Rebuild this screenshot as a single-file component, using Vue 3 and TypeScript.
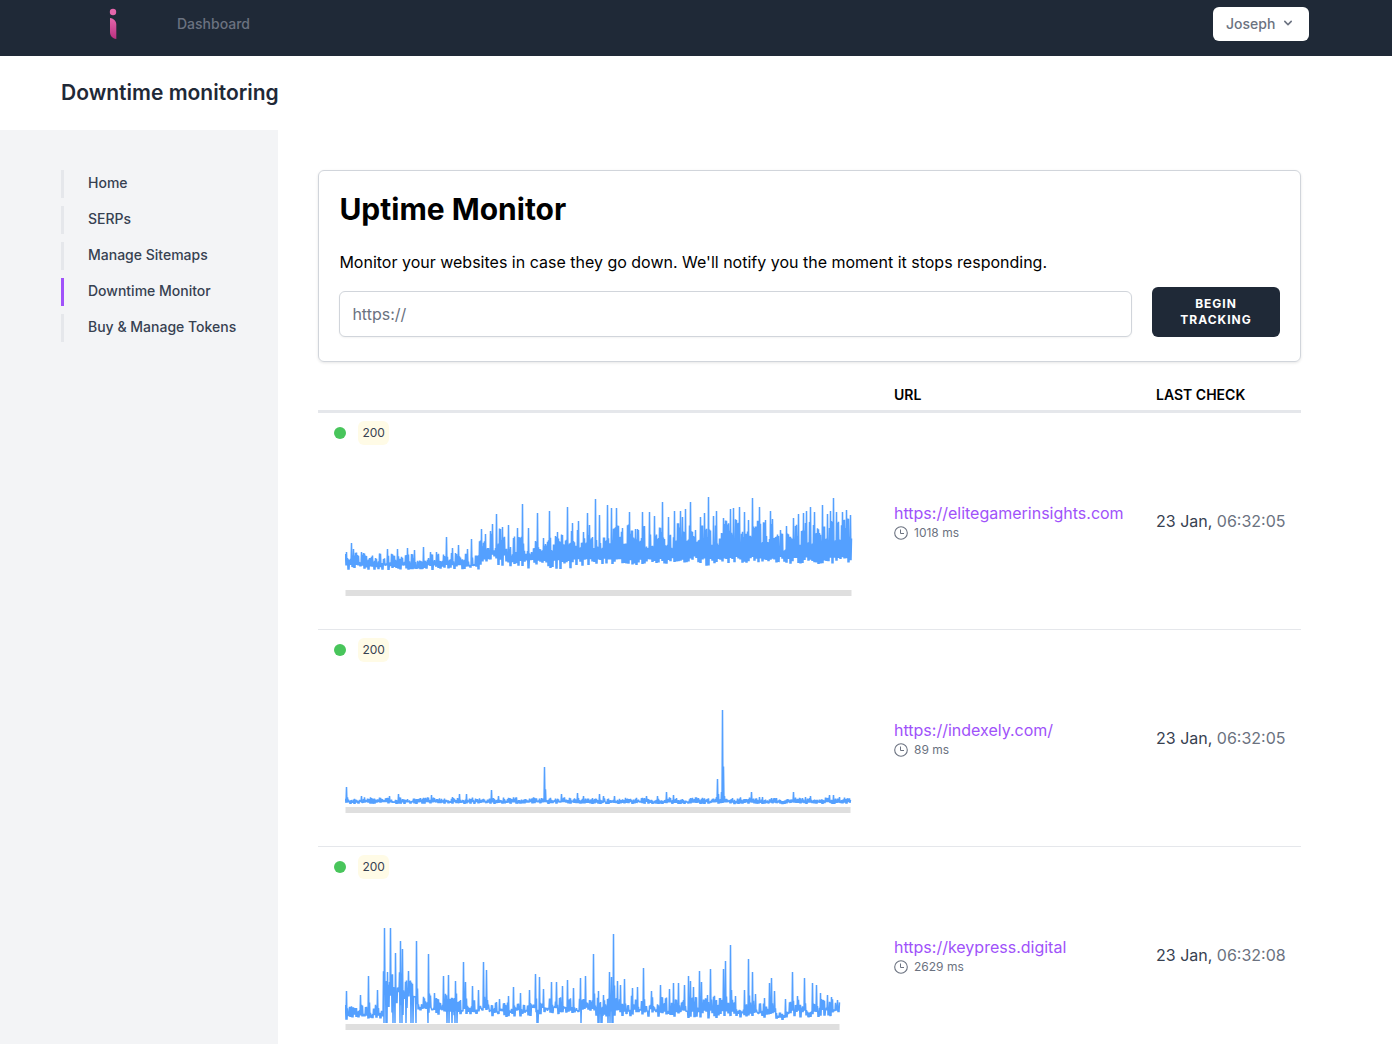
<script setup lang="ts">
import { ref } from 'vue'

type Point = [number, number]
/** Stretch of background noise: start x, highest line, lowest line, variation at the top, variation at the bottom */
type Band = [number, number, number, number, number]

interface Monitor {
  status: number
  url: string
  responseMs: number
  date: string
  time: string
  width: number
  trace: string
}

function buildTrace(width: number, seed: number, bands: Band[], spikes: Point[], drops: number[] = []): string {
  let state = seed
  const random = () => {
    state = (state * 16807) % 2147483647
    return state / 2147483647
  }
  const samples: number[] = []
  let peak = 0
  let dip = 0
  for (let i = 0; i <= width * 2; i++) {
    const x = i / 2
    const band = bands.filter((b) => b[0] <= x).pop() ?? bands[0]
    const [, top, bottom, topVar, bottomVar] = band
    if (i % 4 === 0) {
      peak = top + random() * topVar
      dip = bottom - random() * bottomVar
    }
    samples.push(i % 2 === 0 ? peak + random() * 2 : dip)
  }
  for (const x of drops) samples[x * 2 + 1] = 97
  for (const [x, y] of spikes) {
    const i = Math.min(x * 2, samples.length - 1)
    samples[i] = y
    if (i + 2 < samples.length) samples[i + 2] = Math.min(samples[i + 2], y + (bands[0][2] - y) * 0.6)
  }
  return samples.map((y, i) => `${i / 2},${y.toFixed(1)}`).join(' ')
}

const eliteTrace = buildTrace(
  506,
  4211,
  [
    [0, 60, 78, 12, 5], [93, 66, 77, 7, 3], [98, 60, 78, 12, 5], [133, 42, 76, 18, 10],
    [145, 36, 74, 22, 12], [160, 42, 77, 20, 9], [225, 37, 74, 20, 9], [260, 32, 73, 22, 6],
    [300, 30, 72, 26, 6], [345, 27, 74, 26, 10], [370, 26, 71, 27, 6], [430, 36, 72, 22, 8],
    [450, 28, 72, 24, 8], [490, 26, 71, 24, 6],
  ],
  [
    [1, 60], [6, 51], [8, 57], [16, 60], [42, 57], [52, 57], [62, 56], [69, 58], [78, 55], [85, 60], [91, 60],
    [101, 45], [107, 56], [113, 53], [122, 57], [126, 47], [136, 37], [140, 42], [145, 39], [147, 32], [151, 22],
    [157, 35], [163, 33], [172, 36], [177, 12], [183, 36], [192, 21], [198, 46], [204, 19], [212, 40], [217, 43],
    [222, 15], [227, 31], [233, 29], [238, 40], [242, 21], [244, 33], [250, 7], [254, 23], [262, 13], [266, 16],
    [271, 16], [277, 36], [284, 20], [290, 37], [297, 20], [304, 20], [309, 24], [317, 10], [323, 25], [329, 19],
    [335, 19], [337, 25], [340, 17], [345, 10], [350, 38], [355, 25], [359, 21], [363, 5], [368, 24], [371, 19],
    [378, 26], [385, 17], [388, 16], [394, 15], [399, 20], [403, 28], [407, 6], [414, 15], [420, 28], [425, 19],
    [427, 27], [435, 38], [441, 34], [448, 26], [453, 22], [458, 21], [461, 19], [465, 15], [469, 20], [477, 13],
    [482, 22], [485, 19], [488, 6], [491, 20], [497, 20], [501, 18], [505, 23],
  ],
)

const indexelyTrace = buildTrace(
  505,
  917,
  [[0, 88, 95, 3, 2]],
  [
    [1, 78], [16, 87], [44, 87], [53, 85], [86, 86], [107, 88], [114, 85], [121, 85], [146, 81], [153, 87],
    [199, 58], [216, 85], [232, 84], [238, 87], [254, 85], [258, 87], [269, 87], [301, 87], [312, 87], [321, 83],
    [328, 86], [345, 89], [372, 70], [376, 83], [377, 1], [379, 87], [406, 83], [414, 88], [417, 88], [426, 89],
    [448, 83], [460, 88], [465, 87], [484, 86], [488, 86], [494, 88],
  ],
)

const keypressTrace = buildTrace(
  494,
  6607,
  [
    [0, 78, 94, 10, 6], [37, 43, 92, 28, 28], [57, 50, 86, 24, 20], [72, 68, 90, 14, 9], [85, 66, 90, 16, 9],
    [116, 70, 90, 16, 8], [145, 75, 91, 11, 7], [185, 70, 89, 14, 8], [250, 64, 92, 16, 8], [275, 69, 91, 16, 8],
    [340, 68, 93, 17, 9], [390, 75, 92, 12, 6], [430, 84, 94, 6, 4], [440, 72, 92, 14, 8],
  ],
  [
    [1, 65], [15, 69], [23, 50], [32, 64], [39, 2], [42, 46], [45, 2], [50, 27], [55, 15], [57, 23], [63, 45],
    [71, 15], [83, 28], [89, 67], [98, 50], [103, 49], [110, 55], [118, 36], [120, 56], [127, 60], [133, 64],
    [138, 36], [141, 44], [154, 73], [163, 70], [168, 61], [175, 67], [184, 64], [190, 48], [194, 51], [198, 63],
    [206, 56], [211, 56], [217, 60], [222, 54], [228, 62], [235, 52], [240, 50], [248, 28], [253, 65], [258, 69],
    [264, 46], [266, 51], [268, 8], [272, 55], [275, 59], [279, 53], [287, 62], [292, 61], [298, 42], [306, 65],
    [315, 59], [324, 63], [328, 57], [333, 57], [339, 59], [343, 50], [345, 55], [348, 61], [354, 45], [356, 56],
    [362, 69], [365, 43], [374, 72], [378, 43], [380, 35], [385, 19], [390, 70], [399, 64], [403, 33], [407, 46],
    [410, 68], [419, 72], [424, 57], [426, 52], [429, 65], [440, 73], [447, 46], [452, 70], [459, 52], [467, 57],
    [471, 59], [475, 67], [482, 69], [486, 71], [492, 74],
  ],
  [38, 40, 41, 47, 49, 54, 56, 60, 65, 67, 70, 82, 101, 103, 106, 109, 111, 191, 192, 235, 252, 253, 255, 256, 262, 264, 266, 267],
)

const navItems = ['Home', 'SERPs', 'Manage Sitemaps', 'Downtime Monitor', 'Buy & Manage Tokens']
const activeItem = ref('Downtime Monitor')
const newUrl = ref('')

const monitors: Monitor[] = [
  { status: 200, url: 'https://elitegamerinsights.com', responseMs: 1018, date: '23 Jan,', time: '06:32:05', width: 506, trace: eliteTrace },
  { status: 200, url: 'https://indexely.com/', responseMs: 89, date: '23 Jan,', time: '06:32:05', width: 505, trace: indexelyTrace },
  { status: 200, url: 'https://keypress.digital', responseMs: 2629, date: '23 Jan,', time: '06:32:08', width: 494, trace: keypressTrace },
]
</script>

<template>
  <div class="app">
    <nav class="topbar">
      <div class="topbar-left">
        <a href="#" class="logo" aria-label="Home page">
          <svg width="8" height="32" viewBox="0 0 8 32">
            <defs>
              <linearGradient id="logo-fill" x1="0" y1="0" x2="0" y2="1">
                <stop offset="0" stop-color="#e566ab" />
                <stop offset="1" stop-color="#b8307f" />
              </linearGradient>
            </defs>
            <circle cx="4" cy="4" r="3.2" fill="#e566ab" />
            <path d="M1 10C5 10.500 7.300 13 7.300 17V31C3.300 30.500 1 28 1 24Z" fill="url(#logo-fill)" />
          </svg>
        </a>
        <a href="#" class="topbar-link">Dashboard</a>
      </div>
      <button type="button" class="user-button">
        Joseph
        <svg width="16" height="16" viewBox="0 0 20 20" fill="currentColor" aria-hidden="true">
          <path fill-rule="evenodd" clip-rule="evenodd" d="M5.293 7.293a1 1 0 011.414 0L10 10.586l3.293-3.293a1 1 0 111.414 1.414l-4 4a1 1 0 01-1.414 0l-4-4a1 1 0 010-1.414z" />
        </svg>
      </button>
    </nav>

    <header class="page-header">
      <h2>Downtime monitoring</h2>
    </header>

    <div class="body">
      <aside class="sidebar">
        <ul>
          <li v-for="item in navItems" :key="item">
            <a href="#" :class="{ active: item === activeItem }" @click.prevent="activeItem = item">{{ item }}</a>
          </li>
        </ul>
      </aside>

      <main class="content">
        <section class="card">
          <h1>Uptime Monitor</h1>
          <p><label for="monitor-url">Monitor your websites in case they go down. We'll notify you the moment it stops responding.</label></p>
          <form class="track-form" @submit.prevent>
            <input id="monitor-url" v-model="newUrl" type="text" placeholder="https://" />
            <button type="submit">Begin Tracking</button>
          </form>
        </section>

        <table class="monitors">
          <thead>
            <tr>
              <th class="col-chart"></th>
              <th class="col-url">URL</th>
              <th class="col-check">LAST CHECK</th>
            </tr>
          </thead>
          <tbody>
            <tr v-for="m in monitors" :key="m.url">
              <td class="chart-cell">
                <div class="status">
                  <span class="dot"></span>
                  <span class="badge">{{ m.status }}</span>
                </div>
                <svg class="chart" width="508" height="104" viewBox="0 0 508 104" aria-hidden="true">
                  <rect x="0.5" y="98" :width="m.width" height="6" fill="#dfdfdf" />
                  <polyline :points="m.trace" transform="translate(0.500 0)" fill="none" stroke="#54a0ff" stroke-width="1.5" stroke-linejoin="bevel" />
                </svg>
              </td>
              <td>
                <a :href="m.url" class="url">{{ m.url }}</a>
                <div class="response">
                  <svg width="14" height="14" viewBox="0 0 14 14" fill="none" stroke="currentColor" aria-hidden="true">
                    <circle cx="7" cy="7" r="6.3" stroke-width="1.1" />
                    <path d="M6.500 3.500V7.500H10" stroke-width="1" />
                  </svg>
                  <span>{{ m.responseMs }} ms</span>
                </div>
              </td>
              <td class="checked">{{ m.date }} <span>{{ m.time }}</span></td>
            </tr>
          </tbody>
        </table>
      </main>
    </div>
  </div>
</template>

<style>
body {
  margin: 0;
  background: #fff;
}
</style>

<style scoped>
.app {
  display: flex;
  flex-direction: column;
  min-height: 100vh;
  font-family: Inter, "Liberation Sans", sans-serif;
  font-size: 16px;
  line-height: 24px;
  color: #000;
}

.app *,
.app *::before {
  box-sizing: border-box;
}

a {
  text-decoration: none;
}

.topbar {
  display: flex;
  justify-content: space-between;
  height: 56px;
  padding: 7px 83px 0 109px;
  background: #1f2937;
}

.topbar-left {
  display: flex;
  gap: 60px;
}

.logo {
  padding-top: 1px;
}

.logo svg {
  display: block;
}

.topbar-link {
  height: 34px;
  font-size: 14px;
  font-weight: 500;
  line-height: 34px;
  color: #6b7280;
}

.user-button {
  display: flex;
  align-items: center;
  justify-content: space-between;
  width: 96px;
  height: 34px;
  padding: 0 13px 2px;
  border: 0;
  border-radius: 6px;
  background: #fff;
  font-family: inherit;
  font-size: 14px;
  font-weight: 500;
  color: #6b7280;
}

.page-header {
  padding: 24px 61px;
}

.page-header h2 {
  margin: 0;
  font-size: 21px;
  font-weight: 600;
  line-height: 26px;
  color: #1f2937;
}

.body {
  display: flex;
  flex: 1;
}

.sidebar {
  flex: 0 0 20%;
  padding: 40px 0 0 61px;
  background: #f3f4f6;
}

.sidebar ul {
  display: flex;
  flex-direction: column;
  gap: 8px;
  margin: 0;
  padding: 0;
  list-style: none;
}

.sidebar a {
  display: block;
  padding: 0 0 2px 24px;
  border-left: 3px solid #e5e7eb;
  font-size: 14px;
  font-weight: 500;
  line-height: 26px;
  white-space: nowrap;
  color: #374151;
}

.sidebar a.active {
  border-left-color: #a052fa;
}

.content {
  flex: 1;
  min-width: 0;
  padding: 40px 91px 0 40px;
}

.card {
  padding: 20px 20px 24px;
  border: 1px solid #d1d5db;
  border-radius: 6px;
  box-shadow: 0 1px 3px rgba(0, 0, 0, 0.1);
}

.card h1 {
  margin: 0;
  font-size: 30px;
  font-weight: 700;
  line-height: 36px;
}

.card p {
  margin: 23px 0 13px;
}

.track-form {
  display: flex;
  align-items: flex-end;
  gap: 20px;
}

.track-form input {
  flex: 1;
  min-width: 0;
  height: 46px;
  padding: 0 12px;
  border: 1px solid #d1d5db;
  border-radius: 6px;
  box-shadow: 0 1px 2px rgba(0, 0, 0, 0.05);
  font-family: inherit;
  font-size: 16px;
  color: #374151;
}

.track-form input::placeholder {
  color: #6b7280;
  opacity: 1;
}

.track-form button {
  width: 128px;
  height: 50px;
  padding: 0 16px;
  border: 0;
  border-radius: 6px;
  background: #1f2937;
  font-family: inherit;
  font-size: 12px;
  font-weight: 700;
  line-height: 16px;
  letter-spacing: 1px;
  text-transform: uppercase;
  color: #fff;
}

.monitors {
  width: 100%;
  margin-top: 16px;
  border-collapse: separate;
  border-spacing: 0;
  table-layout: fixed;
}

th {
  padding: 7px 16px 5px;
  border-bottom: 3px solid #e5e7eb;
  font-size: 14px;
  font-weight: 600;
  line-height: 20px;
  text-align: left;
}

.col-url {
  width: 262px;
}

.col-check {
  width: 161px;
}

td {
  padding: 8px 16px;
  border-bottom: 1px solid #e5e7eb;
  vertical-align: middle;
  white-space: nowrap;
}

.chart-cell {
  padding-bottom: 33px;
}

.status {
  display: flex;
  align-items: center;
  gap: 12px;
}

.dot {
  width: 12px;
  height: 12px;
  border-radius: 50%;
  background: #48c55b;
}

.badge {
  padding: 0 4px;
  border-radius: 6px;
  background: #fffbe6;
  font-size: 12px;
  line-height: 24px;
  color: #374151;
}

.chart {
  display: block;
  margin: 47px 0 0 11px;
}

.url {
  color: #a052fa;
}

.response {
  display: flex;
  align-items: center;
  gap: 6px;
  font-size: 12px;
  line-height: 16px;
  color: #6b7280;
}

.checked {
  color: #374151;
}

.checked span {
  color: #6b7280;
}
</style>
